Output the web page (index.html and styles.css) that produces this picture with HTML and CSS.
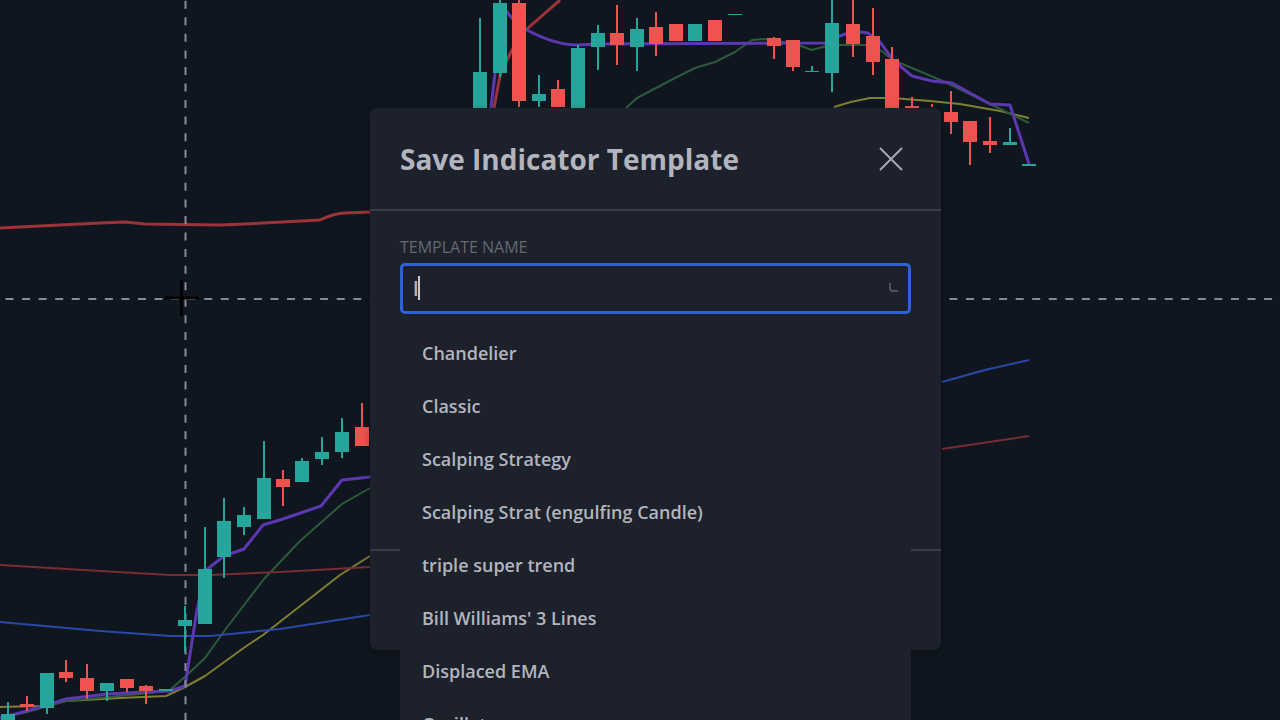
FILE: index.html
```html
<!DOCTYPE html>
<html lang="en">
<head>
    <meta charset="UTF-8">
    <meta name="viewport" content="width=device-width, initial-scale=1.0">
    <title>Save Indicator Template</title>
    <link rel="stylesheet" href="styles.css">
</head>
<body>
    <svg class="chart" viewBox="0 0 1280 720" preserveAspectRatio="xMidYMin slice" aria-hidden="true">
        <!-- Moving averages -->
        <path class="line yellow" d="M0 707L40 706L66 701L120 698L166 696L185 687L205 676L245 647L263 635L340 575L370 556"/>
        <path class="line yellow" d="M834 107Q852 101 870 98L892 98L930 101L960 104L1000 111L1029 118"/>
        <path class="line green" d="M0 718L27 712L66 701L150 693L170 690L188 674L205 658L225 630L264 579L300 541L342 504L370 488"/>
        <path class="line green" d="M626 108L637 98L675 78L695 68L715 62L735 52L752 40L765 39L795 44L812 50L830 45L865 45L880 50L893 60L945 82L990 104L1029 123"/>
        <path class="line maroon" d="M0 565L100 571L170 575L210 575L280 572L370 567"/>
        <path class="line maroon" d="M942 449L1029 436"/>
        <path class="line blue" d="M0 622L100 631L170 636L210 636L280 629L370 615"/>
        <path class="line blue" d="M942 382L985 370L1029 360"/>
        <path class="line red" d="M0 228L100 223L125 222L145 224L220 225L245 224L320 220Q335 213 345 213L370 212"/>
        <path class="line red" d="M494 108L500 76L508 58L519 36L528 28L560 0"/>
        <path class="line purple" d="M0 718L27 711L47 705L66 699L107 694L146 692L170 691L185 686L197 610L205 571L224 556L244 549L263 525L283 519L321 506L342 480L370 477"/>
        <path class="line purple" d="M491 108L500 30L504 8L511 17L527 30Q555 45 578 45L597 44L825 43L840 36L853 31L868 33L880 42L893 60L912 76L932 81L952 83L990 104L1010 105L1029 164"/>

        <!-- Crosshair -->
        <path class="crosshair" d="M185.500 .7V720M5.500 299H1280"/>

        <!-- Candles -->
        <path class="wick up" d="M8 702V720M47 673V714M107 683V701M185 606V652M205 527V624M224 498V578M244 507V535M264 441V519M302 458V482M322 437V465M342 418V458M480 18V108M500 0V77M539 75V107M578 45V108M598 25V70M637 18V71M812 66V72M832 0V92M1010 128V145"/>
        <path class="wick down" d="M27 696V711M66 660V682M87 664V699M127 679V692M146 685V704M283 470V506M362 403V446M519 0V107M558 80V107M617 5V65M656 12V56M774 37V59M793 40V71M853 0V57M873 8V75M892 47V108M912 97V108M932 104V107M951 91V134M970 121V165M990 117V153"/>
        <path class="body up" d="M8 714V720M47 673V708M107 683V691M166 689V691M185 620V626M205 569V624M224 521V557M244 515V527M264 478V519M302 461V482M322 452V459M342 432V452M480 72V108M500 3V73M539 94V101M578 48V108M598 33V47M637 29V47M695 24V41M735 14V15M812 71V72M832 23V73M1010 142V145M1029 164V166"/>
        <path class="body down" d="M27 704V707M66 672V678M87 678V691M127 679V688M146 686V691M283 479V487M362 427V446M519 3V101M558 89V107M617 33V45M656 27V44M676 24V41M715 20V41M774 38V46M793 40V67M853 24V44M873 36V62M892 59V108M912 106V108M951 112V122M970 121V142M990 141V145"/>

        <path class="cursor" d="M165 298H199M181.500 280V316"/>
    </svg>

    <main class="overlay">
        <form class="dialog" role="dialog" aria-labelledby="dialog-title">
            <header class="dialog-header">
                <h1 id="dialog-title">Save Indicator Template</h1>
                <button type="button" class="close" aria-label="Close">
                    <svg width="26" height="26" viewBox="0 0 26 26"><path d="M2 2L24 24M24 2L2 24"/></svg>
                </button>
            </header>
            <div class="dialog-body">
                <label for="template-name">Template name</label>
                <div class="field">
                    <input type="text" id="template-name" value="l" autocomplete="off">
                    <span class="caret"></span>
                    <svg class="spinner" width="10" height="10" viewBox="0 0 10 10"><path d="M1 0V5Q1 8 4 8H9"/></svg>
                    <ul class="suggestions">
                        <li><button type="button">Chandelier</button></li>
                        <li><button type="button">Classic</button></li>
                        <li><button type="button">Scalping Strategy</button></li>
                        <li><button type="button">Scalping Strat (engulfing Candle)</button></li>
                        <li><button type="button">triple super trend</button></li>
                        <li><button type="button">Bill Williams' 3 Lines</button></li>
                        <li><button type="button">Displaced EMA</button></li>
                        <li><button type="button">Oscillators</button></li>
                    </ul>
                </div>
            </div>
            <footer class="dialog-footer"></footer>
        </form>
    </main>
</body>
</html>
```
FILE: styles.css
```css
:root {
    --background-color: #10161f;
    --dialog-color: #1d212c;
    --border-color: #3a3d48;
    --text-color: #b2b5be;
    --focus-color: #2f62d9;
}

* {
    box-sizing: border-box;
    margin: 0;
    padding: 0;
    font-family: "Open Sans", "Noto Sans", sans-serif;
}

body {
    height: 100vh;
    overflow: hidden;
    background-color: var(--background-color);
    color: var(--text-color);
}

/* Chart */
.chart {
    position: absolute;
    inset: 0;
    width: 100%;
    height: 100%;
}

.line {
    fill: none;
    stroke-width: 2;
    stroke-linejoin: round;
}

.line.yellow {
    stroke: #7f7f32;
}

.line.green {
    stroke: #2c5a3d;
}

.line.maroon {
    stroke: #7a2c33;
}

.line.blue {
    stroke: #2849a8;
}

.line.red {
    stroke: #9c3338;
    stroke-width: 3;
}

.line.purple {
    stroke: #5c38b0;
    stroke-width: 3;
}

.wick {
    stroke-width: 2;
}

.body {
    stroke-width: 14;
}

.up {
    stroke: #26a69a;
}

.down {
    stroke: #ef5350;
}

.crosshair {
    stroke: #868a93;
    stroke-width: 2;
    stroke-dasharray: 8 8.56;
}

.cursor {
    stroke: #000;
    stroke-width: 3;
}

/* Dialog */
.overlay {
    position: relative;
    display: flex;
    justify-content: center;
    padding: 108px 0 0 31px;
}

.dialog {
    width: 571px;
    max-width: 100%;
    background-color: var(--dialog-color);
    border-radius: 7px;
    box-shadow: 0 3px 8px rgba(0, 0, 0, 0.3);
}

.dialog-header {
    display: flex;
    align-items: center;
    justify-content: space-between;
    padding: 30px 37px 29px 30px;
    border-bottom: 2px solid var(--border-color);
}

h1 {
    font-size: 28px;
    line-height: 42px;
    font-weight: 700;
}

.close {
    display: flex;
    border: none;
    background: none;
    cursor: pointer;
}

.close svg {
    fill: none;
    stroke: #a6a9b3;
    stroke-width: 2;
}

.dialog-body {
    height: 338px;
    padding: 24px 30px;
}

label {
    display: block;
    margin-bottom: 4px;
    font-size: 16px;
    line-height: 24px;
    color: #656872;
    text-transform: uppercase;
}

.field {
    position: relative;
}

input[type="text"] {
    display: block;
    width: 100%;
    height: 51px;
    padding: 0 10px;
    border: 3px solid var(--focus-color);
    border-radius: 5px;
    outline: none;
    background-color: var(--dialog-color);
    color: var(--text-color);
    font-size: 20px;
    font-weight: 600;
}

.caret {
    position: absolute;
    top: 13px;
    left: 18px;
    width: 2px;
    height: 24px;
    background-color: #c8cad0;
}

.spinner {
    position: absolute;
    top: 20px;
    right: 12px;
    fill: none;
    stroke: #50535e;
    stroke-width: 2;
}

.suggestions {
    position: absolute;
    top: 100%;
    left: 0;
    width: 100%;
    padding: 13px 0;
    background-color: var(--dialog-color);
    list-style: none;
}

.suggestions button {
    display: block;
    width: 100%;
    padding: 0 22px;
    border: none;
    background: none;
    color: var(--text-color);
    font-size: 18px;
    font-weight: 600;
    line-height: 53px;
    text-align: left;
    cursor: pointer;
}

.dialog-footer {
    height: 101px;
    border-top: 2px solid var(--border-color);
}
```
